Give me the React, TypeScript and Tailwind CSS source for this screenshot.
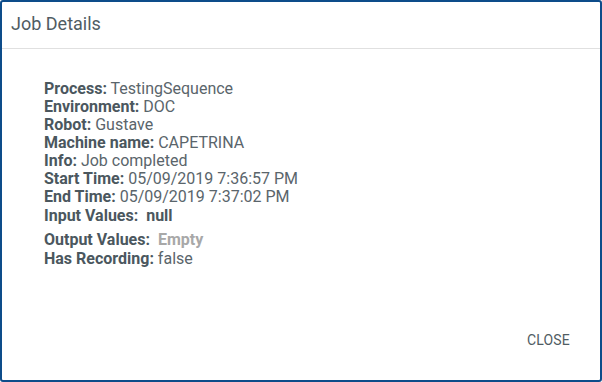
import React from 'react';

const rows: { label: string; value: string }[] = [
  { label: 'Process:', value: 'TestingSequence' },
  { label: 'Environment:', value: 'DOC' },
  { label: 'Robot:', value: 'Gustave' },
  { label: 'Machine name:', value: 'CAPETRINA' },
  { label: 'Info:', value: 'Job completed' },
  { label: 'Start Time:', value: '05/09/2019 7:36:57 PM' },
  { label: 'End Time:', value: '05/09/2019 7:37:02 PM' },
];

const App: React.FC = () => {
  return (
    <div className="w-[602px] h-[382px] bg-white font-['Roboto',sans-serif]">
      <div className="w-full h-full border-2 border-[#0d4c8a] rounded-[3px] flex flex-col">
        <header className="h-[47px] pl-[9px] flex items-center border-b border-[#e0e0e0]">
          <h2 className="text-[18px] text-[#505c63] mt-[-3px]">Job Details</h2>
        </header>

        <div className="flex-1 pl-[42px] pt-[31px] text-[16px] leading-[18px] text-[#5a656b]">
          {rows.map((r) => (
            <div key={r.label}>
              <span className="font-bold text-[#4b575e]">{r.label}</span> {r.value}
            </div>
          ))}
          <div className="mt-[1px]">
            <span className="font-bold text-[#4b575e]">Input Values:</span>
            <span className="font-bold text-[#4b575e]">&nbsp; null</span>
          </div>
          <div className="mt-[6px]">
            <span className="font-bold text-[#4b575e]">Output Values:</span>
            <span className="font-bold text-[#a8a8a8]">&nbsp; Empty</span>
          </div>
          <div className="mt-[1px]">
            <span className="font-bold text-[#4b575e]">Has Recording:</span> false
          </div>
        </div>

        <footer className="flex justify-end pr-[30px] pb-[29px]">
          <button className="text-[14px] font-normal text-[#505c63] tracking-[0.2px]">CLOSE</button>
        </footer>
      </div>
    </div>
  );
};

export default App;
